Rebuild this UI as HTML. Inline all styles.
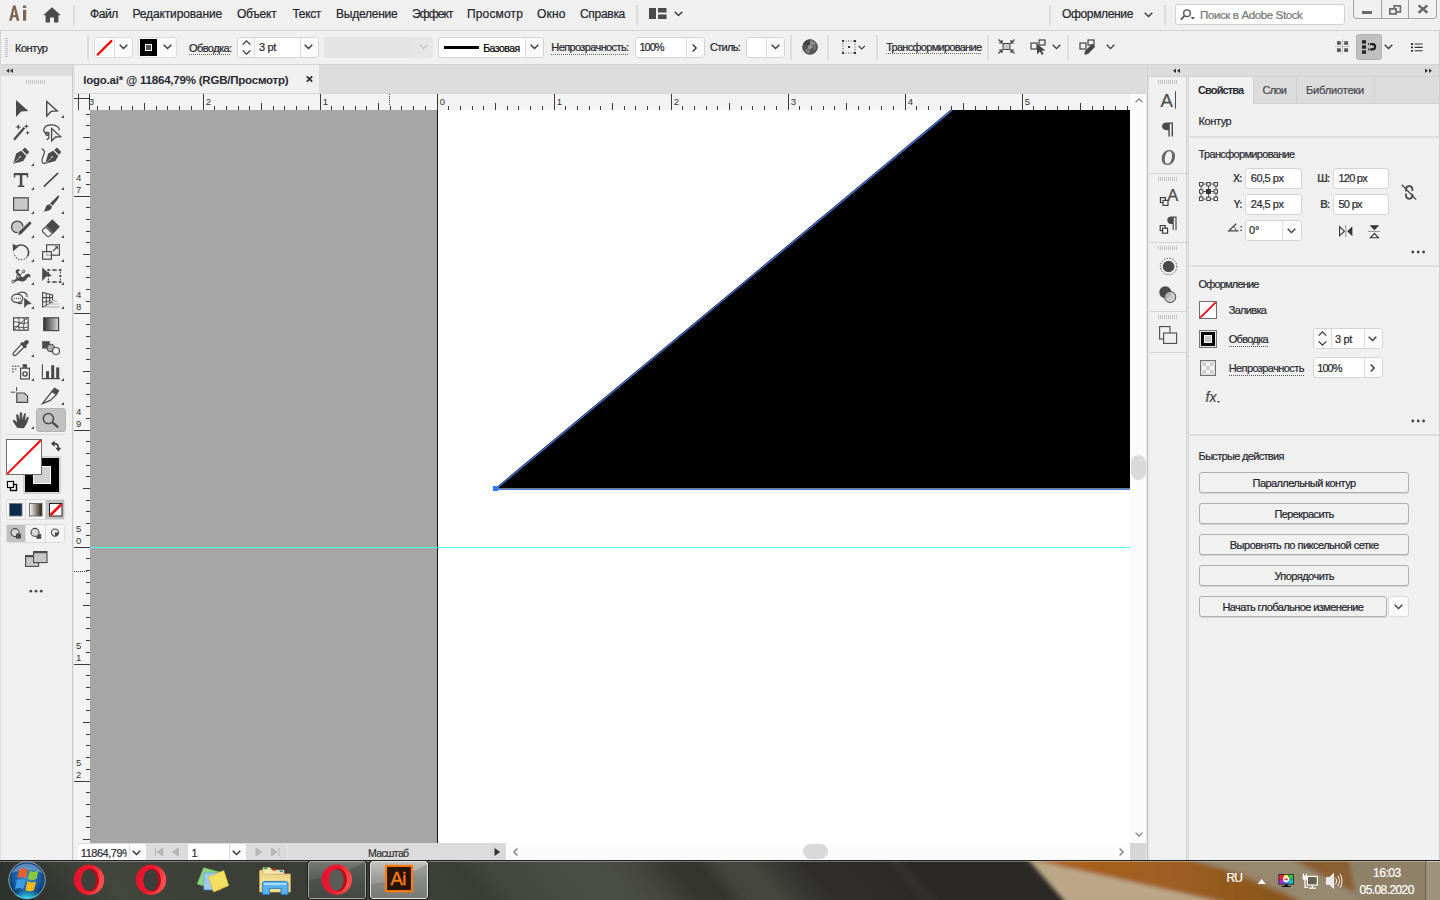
<!DOCTYPE html>
<html><head><meta charset="utf-8">
<style>
*{box-sizing:border-box;margin:0;padding:0}
html,body{width:1440px;height:900px;overflow:hidden;background:#f0f0f0;font-family:"Liberation Sans",sans-serif;font-size:11px;color:#333}
.a{position:absolute}
.t{position:absolute;white-space:nowrap;line-height:1;color:#26262e;-webkit-text-stroke:0.22px currentColor}
svg{position:absolute;overflow:visible}
.fld{position:absolute;background:#fff;border:1px solid #d4d4d4;border-radius:2px}
.lf{position:absolute;background:#fafafa;border:1px solid #dcdcdc;border-radius:2px}
.btn{position:absolute;border:1px solid #b0b0b0;border-radius:3px;background:#f1f1f1;box-shadow:0 1px 0 #d4d4d4}
.vs{position:absolute;width:1px;background:#d2d2d2}
.hs{position:absolute;height:1px;background:#d2d2d2}
.du{border-bottom:1px dotted #666;padding-bottom:1px}
</style></head><body>
<!-- menubar -->
<div class="a" id="menubar" style="left:0;top:0;width:1440px;height:31px;background:#f0f0f0;"></div>
<!-- Ai logo -->
<svg style="left:0;top:0" width="30" height="30" viewBox="0 0 30 30"><path fill-rule="evenodd" d="M9.1 20.8 L13 5.4 L15.6 5.4 L19.4 20.8 L16.7 20.8 L15.9 17.3 L12.6 17.3 L11.8 20.8 Z M13.1 15.1 L15.4 15.1 L14.25 9.2 Z M23 9.7 H26.2 V20.8 H23 Z M23 5.4 H26.2 V8.1 H23 Z" fill="#806453"/></svg>
<!-- home -->
<svg style="left:43px;top:7px" width="18" height="16" viewBox="0 0 18 16"><path d="M9 0.3 L0.2 8.2 L2.6 8.2 L2.6 15.6 L7 15.6 L7 10.6 L11 10.6 L11 15.6 L15.4 15.6 L15.4 8.2 L17.8 8.2 Z" fill="#4b4b4b"/></svg>
<div class="vs" style="left:73px;top:5px;height:20px;width:2px;background:#dcdcdc"></div>
<span class="t" style="left:90.00px;top:8.00px;font-size:12px;letter-spacing:-0.379px;">Файл</span>
<span class="t" style="left:132.50px;top:8.00px;font-size:12px;letter-spacing:-0.137px;">Редактирование</span>
<span class="t" style="left:237.00px;top:8.00px;font-size:12px;letter-spacing:-0.229px;">Объект</span>
<span class="t" style="left:292.50px;top:8.00px;font-size:12px;letter-spacing:-0.344px;">Текст</span>
<span class="t" style="left:336.00px;top:8.00px;font-size:12px;letter-spacing:-0.233px;">Выделение</span>
<span class="t" style="left:412.00px;top:8.00px;font-size:12px;letter-spacing:-0.906px;">Эффект</span>
<span class="t" style="left:467.00px;top:8.00px;font-size:12px;letter-spacing:0.148px;">Просмотр</span>
<span class="t" style="left:537.00px;top:8.00px;font-size:12px;letter-spacing:0.152px;">Окно</span>
<span class="t" style="left:580.00px;top:8.00px;font-size:12px;letter-spacing:-0.297px;">Справка</span>
<div class="vs" style="left:636px;top:5px;height:20px;width:2px;background:#dcdcdc"></div>
<!-- workspace switcher icon -->
<svg style="left:649px;top:8px" width="18" height="12" viewBox="0 0 18 12"><rect x="0" y="0" width="7" height="11" fill="#4b4b4b"/><rect x="9" y="0" width="8.5" height="4.5" fill="#4b4b4b"/><rect x="9" y="6.5" width="8.5" height="4.5" fill="#4b4b4b"/></svg>
<svg style="left:674px;top:11px" width="9" height="6" viewBox="0 0 9 6"><path d="M0.7 0.8 L4.5 4.6 L8.3 0.8" fill="none" stroke="#3a3a3a" stroke-width="1.4"/></svg>
<!-- right side -->
<div class="vs" style="left:1049px;top:5px;height:20px;width:2px;background:#dcdcdc"></div>
<span class="t" style="left:1062.00px;top:8.00px;font-size:12px;letter-spacing:-0.348px;">Оформление</span>
<svg style="left:1144px;top:12px" width="9" height="6" viewBox="0 0 9 6"><path d="M0.7 0.8 L4.5 4.6 L8.3 0.8" fill="none" stroke="#3a3a3a" stroke-width="1.4"/></svg>
<div class="vs" style="left:1164px;top:5px;height:20px;width:2px;background:#dcdcdc"></div>
<div class="fld" style="left:1175px;top:4px;width:170px;height:21px;border-color:#d0d0d0;border-radius:3px"></div>
<svg style="left:1180px;top:8px" width="16" height="13" viewBox="0 0 16 13"><circle cx="7" cy="5.2" r="3.3" fill="none" stroke="#555" stroke-width="1.4"/><path d="M4.7 7.6 L0.8 11.6" stroke="#555" stroke-width="1.7"/><path d="M10.6 9 L15 9 L12.8 11.5 Z" fill="#555"/></svg>
<span class="t" style="left:1200.00px;top:10.00px;font-size:11.5px;letter-spacing:-0.373px;color:#777">Поиск в Adobe Stock</span>
<!-- window buttons -->
<div class="a" style="left:1353px;top:-2px;width:84px;height:21px;border:1px solid #a2a2a2;border-radius:0 0 3px 3px;background:#f0f0f0"></div>
<div class="vs" style="left:1381px;top:0;height:18px;background:#a2a2a2"></div>
<div class="vs" style="left:1408px;top:0;height:18px;background:#a2a2a2"></div>
<div class="a" style="left:1362px;top:11px;width:10px;height:3px;background:#6a6a6a"></div>
<svg style="left:1389px;top:5px" width="13" height="10" viewBox="0 0 13 10"><rect x="5.2" y="0.9" width="6.2" height="6" fill="none" stroke="#6a6a6a" stroke-width="1.7"/><rect x="0.9" y="3.9" width="6.2" height="5" fill="#f0f0f0" stroke="#6a6a6a" stroke-width="1.7"/></svg>
<svg style="left:1417px;top:4px" width="12" height="10" viewBox="0 0 12 10"><path d="M1.6 1.4 L10.4 8.8 M10.4 1.4 L1.6 8.8" stroke="#6a6a6a" stroke-width="2.5"/></svg>

<!-- ctrlbar -->
<div class="a" id="ctrlbar" style="left:0;top:30px;width:1440px;height:35px;background:#f0f0f0;border:1px solid #d4d4d4"></div>
<!-- gripper -->
<div class="a" style="left:5px;top:38px;width:3px;height:19px;background:repeating-linear-gradient(#c4c4c4 0 1px,transparent 1px 2px)"></div>
<span class="t" style="left:15.00px;top:43.00px;font-size:11px;letter-spacing:-0.461px;">Контур</span>
<div class="vs" style="left:87px;top:35px;height:25px;width:2px;background:#dedede"></div>
<!-- fill widget -->
<div class="lf" style="left:94px;top:37px;width:39px;height:21px;border-radius:3px"></div>
<div class="a" style="left:95px;top:38px;width:20px;height:19px;background:#fff;border-right:1px solid #dcdcdc;border-radius:2px 0 0 2px"></div>
<svg style="left:95px;top:38px" width="20" height="19"><path d="M2 17.2 L17 2.4" stroke="#f40000" stroke-width="2.2"/></svg>
<svg style="left:119px;top:44px" width="9" height="6" viewBox="0 0 9 6"><path d="M0.7 0.8 L4.5 4.6 L8.3 0.8" fill="none" stroke="#3a3a3a" stroke-width="1.4"/></svg>
<!-- stroke widget -->
<div class="lf" style="left:138px;top:37px;width:39px;height:21px;border-radius:3px"></div>
<div class="a" style="left:140px;top:39px;width:17px;height:17px;background:#000"></div>
<div class="a" style="left:145px;top:44px;width:7px;height:7px;background:#555;border:1px solid #fff"></div>
<svg style="left:163px;top:44px" width="9" height="6" viewBox="0 0 9 6"><path d="M0.7 0.8 L4.5 4.6 L8.3 0.8" fill="none" stroke="#3a3a3a" stroke-width="1.4"/></svg>
<span class="t" style="left:189.00px;top:43.00px;font-size:11px;letter-spacing:-0.576px;">Обводка:</span>
<div class="a" style="left:189px;top:54px;width:42px;height:1px;background:repeating-linear-gradient(90deg,#666 0 1px,transparent 1px 2px)"></div>
<!-- stroke weight field -->
<div class="fld" style="left:237px;top:37px;width:82px;height:21px;border-radius:3px"></div>
<div class="a" style="left:238px;top:38px;width:17px;height:19px;background:#fafafa;border-right:1px solid #dcdcdc;border-radius:2px 0 0 2px"></div>
<div class="a" style="left:300px;top:38px;width:18px;height:19px;background:#fafafa;border-left:1px solid #dcdcdc;border-radius:0 2px 2px 0"></div>
<svg style="left:242px;top:40px" width="9" height="15" viewBox="0 0 9 15"><path d="M0.7 4.6 L4.5 0.8 L8.3 4.6 M0.7 10.4 L4.5 14.2 L8.3 10.4" fill="none" stroke="#3a3a3a" stroke-width="1.3"/></svg>
<span class="t" style="left:259.00px;top:42.00px;font-size:11px;letter-spacing:-0.340px;">3 pt</span>
<svg style="left:304px;top:44px" width="9" height="6" viewBox="0 0 9 6"><path d="M0.7 0.8 L4.5 4.6 L8.3 0.8" fill="none" stroke="#3a3a3a" stroke-width="1.4"/></svg>
<!-- disabled dropdown -->
<div class="a" style="left:324px;top:37px;width:109px;height:21px;background:#e4e4e4;border-radius:2px"></div>
<div class="a" style="left:413px;top:37px;width:20px;height:21px;background:#e6e6e6;border-radius:2px"></div>
<svg style="left:419px;top:44px" width="9" height="6" viewBox="0 0 9 6"><path d="M0.7 0.8 L4.5 4.6 L8.3 0.8" fill="none" stroke="#c6c6c6" stroke-width="1.4"/></svg>
<!-- brush definition -->
<div class="fld" style="left:438px;top:37px;width:106px;height:21px;border-radius:3px"></div>
<div class="a" style="left:525px;top:38px;width:18px;height:19px;background:#fafafa;border-left:1px solid #dcdcdc;border-radius:0 2px 2px 0"></div>
<div class="a" style="left:444px;top:46px;width:35px;height:3px;background:#000"></div>
<span class="t" style="left:483.20px;top:43.00px;font-size:10.5px;letter-spacing:-0.520px;color:#000">Базовая</span>
<svg style="left:530px;top:44px" width="9" height="6" viewBox="0 0 9 6"><path d="M0.7 0.8 L4.5 4.6 L8.3 0.8" fill="none" stroke="#3a3a3a" stroke-width="1.4"/></svg>
<span class="t" style="left:551.30px;top:42.00px;font-size:11px;letter-spacing:-0.615px;">Непрозрачность:</span>
<div class="a" style="left:551px;top:54px;width:77px;height:1px;background:repeating-linear-gradient(90deg,#666 0 1px,transparent 1px 2px)"></div>
<!-- opacity field -->
<div class="fld" style="left:635px;top:37px;width:70px;height:21px;border-radius:3px"></div>
<div class="a" style="left:686px;top:38px;width:18px;height:19px;background:#fafafa;border-left:1px solid #dcdcdc;border-radius:0 2px 2px 0"></div>
<span class="t" style="left:639.50px;top:42.00px;font-size:11px;letter-spacing:-1.010px;">100%</span>
<svg style="left:692.2px;top:43.6px" width="6" height="8" viewBox="0 0 6 8"><path d="M0.7 0.6 L4.1 4 L0.7 7.4" fill="none" stroke="#3a3a3a" stroke-width="1.4"/></svg>
<span class="t" style="left:710.00px;top:42.00px;font-size:11px;letter-spacing:-0.724px;">Стиль:</span>
<div class="fld" style="left:746px;top:37px;width:39px;height:21px;border-radius:3px"></div>
<div class="a" style="left:766px;top:38px;width:18px;height:19px;background:#fafafa;border-left:1px solid #dcdcdc;border-radius:0 2px 2px 0"></div>
<svg style="left:771px;top:44px" width="9" height="6" viewBox="0 0 9 6"><path d="M0.7 0.8 L4.5 4.6 L8.3 0.8" fill="none" stroke="#3a3a3a" stroke-width="1.4"/></svg>
<div class="vs" style="left:790px;top:35px;height:25px;width:2px;background:#dedede"></div>
<!-- globe (recolor) -->
<svg style="left:802px;top:39px" width="16" height="16" viewBox="0 0 16 16"><circle cx="8" cy="8" r="7.6" fill="#555"/><path d="M8 8 L8 0.4 A7.6 7.6 0 0 1 14.6 4.2 Z" fill="#8a8a8a"/><path d="M8 8 L14.6 4.2 A7.6 7.6 0 0 1 14.6 11.8 Z" fill="#6e6e6e"/><path d="M8 8 L8 15.6 A7.6 7.6 0 0 1 1.4 11.8 Z" fill="#777"/><path d="M8 8 L1.4 4.2 A7.6 7.6 0 0 1 8 0.4 Z" fill="#444"/><circle cx="8" cy="8" r="2" fill="#999"/><circle cx="8" cy="8" r="7.2" fill="none" stroke="#444" stroke-width="0.8"/></svg>
<div class="vs" style="left:827px;top:35px;height:25px;width:2px;background:#dedede"></div>
<!-- align icon -->
<svg style="left:842px;top:40px" width="24" height="14" viewBox="0 0 24 14"><rect x="1" y="1" width="12" height="12" fill="none" stroke="#444" stroke-width="1" stroke-dasharray="1 1.5"/><rect x="0" y="0" width="2" height="2" fill="#333"/><rect x="12" y="0" width="2" height="2" fill="#333"/><rect x="0" y="12" width="2" height="2" fill="#333"/><rect x="12" y="12" width="2" height="2" fill="#333"/><rect x="6" y="6" width="2" height="2" fill="#333"/><path d="M16.5 5.8 L19.7 9 L22.9 5.8" fill="none" stroke="#3a3a3a" stroke-width="1.2"/></svg>
<div class="vs" style="left:876px;top:35px;height:25px;width:2px;background:#dedede"></div>
<span class="t" style="left:886.20px;top:42.00px;font-size:11px;letter-spacing:-0.719px;">Трансформирование</span>
<div class="a" style="left:886px;top:53px;width:95px;height:1px;background:repeating-linear-gradient(90deg,#666 0 1px,transparent 1px 2px)"></div>
<div class="vs" style="left:987px;top:35px;height:25px;width:2px;background:#dedede"></div>
<!-- isolate icon -->
<svg style="left:998px;top:39px" width="17" height="15" viewBox="0 0 17 15"><rect x="5" y="4.5" width="7" height="6" fill="#c8c8c8" stroke="#444" stroke-width="1"/><path d="M0.5 0.5 L4 4 M1 4 L4 4 L4 1 M16.5 0.5 L13 4 M16 4 L13 4 L13 1 M0.5 14.5 L4 11 M1 11 L4 11 L4 14 M16.5 14.5 L13 11 M16 11 L13 11 L13 14" fill="none" stroke="#444" stroke-width="1.2"/></svg>
<!-- select similar icon -->
<svg style="left:1030px;top:39px" width="17" height="16" viewBox="0 0 17 16"><rect x="1" y="4" width="6" height="6" fill="none" stroke="#444" stroke-width="1.2"/><rect x="9" y="1" width="6" height="5" fill="none" stroke="#444" stroke-width="1.2"/><path d="M7 5 L7 15.5 L9.8 12.6 L12 16 L13.6 15 L11.6 11.8 L15.5 11.4 Z" fill="#444"/></svg>
<svg style="left:1052px;top:44px" width="9" height="6" viewBox="0 0 9 6"><path d="M0.7 0.8 L4.5 4.6 L8.3 0.8" fill="none" stroke="#3a3a3a" stroke-width="1.3"/></svg>
<div class="vs" style="left:1067px;top:35px;height:25px;width:2px;background:#dedede"></div>
<!-- edit similar icon -->
<svg style="left:1079px;top:39px" width="17" height="16" viewBox="0 0 17 16"><rect x="1" y="4" width="6" height="6" fill="none" stroke="#444" stroke-width="1.2"/><rect x="9" y="1" width="6" height="5" fill="none" stroke="#444" stroke-width="1.2"/><path d="M5.2 15.8 L6 12 L13.2 4.8 L16.2 7.8 L9 15 Z" fill="#444"/></svg>
<svg style="left:1106px;top:44px" width="9" height="6" viewBox="0 0 9 6"><path d="M0.7 0.8 L4.5 4.6 L8.3 0.8" fill="none" stroke="#3a3a3a" stroke-width="1.3"/></svg>
<!-- right icons -->
<svg style="left:1335px;top:39px" width="15" height="15" viewBox="0 0 15 15"><path d="M7.4 0 L7.4 15 M0 7.4 L15 7.4" stroke="#b4b4b4" stroke-width="0.8"/><rect x="2" y="2.2" width="3.8" height="3.6" fill="#555"/><rect x="9.2" y="2.2" width="3.8" height="3.6" fill="#555"/><rect x="2" y="9.3" width="3.8" height="3.6" fill="#555"/><rect x="9.2" y="9.3" width="3.8" height="3.6" fill="#555"/></svg>
<div class="a" style="left:1356px;top:34px;width:26px;height:26px;background:#c0c0c0;border:1px solid #b2b2b2;border-radius:3px"></div>
<svg style="left:1362px;top:40px" width="15" height="14" viewBox="0 0 15 14"><rect x="0" y="0.2" width="4" height="3.4" fill="#222"/><rect x="0" y="5.3" width="4" height="3.4" fill="#222"/><rect x="0" y="10.4" width="4" height="3.4" fill="#222"/><path d="M6.2 4.2 L10.5 4.2 A2.6 2.6 0 0 1 10.5 9.4 L6.2 9.4" fill="none" stroke="#222" stroke-width="2.2"/><path d="M7.6 3 L7.6 10.6" stroke="#c0c0c0" stroke-width="0.9"/></svg>
<svg style="left:1383.5px;top:44px" width="9" height="6" viewBox="0 0 9 6"><path d="M0.7 0.8 L4.5 4.6 L8.3 0.8" fill="none" stroke="#3a3a3a" stroke-width="1.4"/></svg>
<svg style="left:1410.5px;top:43px" width="12" height="9" viewBox="0 0 12 9"><path d="M0 1 L2 1 M0 4.4 L2 4.4 M0 7.8 L2 7.8" stroke="#333" stroke-width="1.8"/><path d="M3.6 1 L11.6 1 M3.6 4.4 L11.6 4.4 M3.6 7.8 L11.6 7.8" stroke="#333" stroke-width="1.1"/></svg>

<!-- tools -->
<div class="a" id="tools" style="left:0;top:65px;width:72px;height:795px;background:#f0f0f0;border-left:1px solid #e0e0e0"></div>
<div class="a" style="left:1px;top:65px;width:71px;height:11px;background:#dcdcdc"></div>
<div class="a" style="left:72px;top:65px;width:2px;height:795px;background:#e6e6e6;border-left:1px solid #c9c9c9"></div>
<div class="a" style="left:26px;top:80px;width:20px;height:4px;background:repeating-linear-gradient(90deg,#c6c6c6 0 1px,transparent 1px 2px)"></div>
<div class="a" style="left:36px;top:408px;width:30px;height:24px;background:#c1c1c1;border:1px solid #b3b3b3;border-radius:3px"></div>
<div class="hs" style="left:6px;top:434px;width:60px;background:#dcdcdc"></div>
<svg style="left:0;top:65px" width="74" height="795" viewBox="0 65 74 795">
<g fill="#4a4a4a" stroke="none">
<!-- collapse arrows -->
<path d="M9.2 68.6 L6.2 70.8 L9.2 73 Z M13 68.6 L10 70.8 L13 73 Z" fill="#333"/>
<!-- corner triangles -->
<g id="tri"><path d="M64 115 L64 118 L61 118 Z"/></g>
<path d="M34 163 L34 166 L31 166 Z"/>
<path d="M34 187 L34 190 L31 190 Z M64 187 L64 190 L61 190 Z"/>
<path d="M34 211 L34 214 L31 214 Z M64 211 L64 214 L61 214 Z"/>
<path d="M34 235 L34 238 L31 238 Z M64 235 L64 238 L61 238 Z"/>
<path d="M34 259 L34 262 L31 262 Z M64 259 L64 262 L61 262 Z"/>
<path d="M34 282 L34 285 L31 285 Z M64 282 L64 285 L61 285 Z"/>
<path d="M34 306 L34 309 L31 309 Z M64 306 L64 309 L61 309 Z"/>
<path d="M34 354 L34 357 L31 357 Z"/>
<path d="M34 378 L34 381 L31 381 Z M64 378 L64 381 L61 381 Z"/>
<path d="M64 402 L64 405 L61 405 Z"/>
<path d="M34 426 L34 429 L31 429 Z"/>
<!-- 1 selection -->
<path d="M16 100 L28.3 111 L21.2 111.6 L16 117 Z"/>
<!-- 2 direct selection -->
<path d="M46.7 101.6 L57.2 110.9 L51.2 111.4 L46.7 116 Z" fill="none" stroke="#4a4a4a" stroke-width="1.4"/>
<!-- 3 magic wand -->
<path d="M14 139.8 L24.3 127.8" stroke="#4a4a4a" stroke-width="2.3" fill="none"/>
<path d="M18.3 124 L19.1 126.3 L21.4 127 L19.1 127.8 L18.3 130 L17.5 127.8 L15.2 127 L17.5 126.3 Z"/>
<path d="M26.3 123.6 L27 125.7 L29.1 126.3 L27 127 L26.3 129 L25.6 127 L23.5 126.3 L25.6 125.7 Z"/>
<path d="M27.6 130.6 L28.2 132.2 L29.8 132.8 L28.2 133.4 L27.6 135 L27 133.4 L25.4 132.8 L27 132.2 Z"/>
<!-- 4 lasso -->
<path d="M49 134.3 C45 133.8 43.3 131.5 43.8 129.3 C44.6 126 48.5 124.8 52 124.9 C56.5 125 59.6 127.3 59.2 130.3" fill="none" stroke="#4a4a4a" stroke-width="1.3"/>
<circle cx="47.3" cy="133.8" r="1.7" fill="none" stroke="#4a4a4a" stroke-width="1.2"/>
<path d="M48.5 135 C49.3 137 48.5 139 46.6 139.8" fill="none" stroke="#4a4a4a" stroke-width="1.2"/>
<path d="M51.6 128.6 L60.6 136.6 L55.6 137 L51.6 141 Z" fill="#f0f0f0" stroke="#4a4a4a" stroke-width="1.3"/>
<!-- 5 pen -->
<g id="pen"><path d="M13.2 163.8 L16.2 153.6 L21.3 150.8 L26.3 155.9 L23.4 161 Z M13.9 163.1 L19.4 157.6" />
<path d="M14 163 L19.4 157.6" stroke="#c8c8c8" stroke-width="0.8" fill="none"/><circle cx="20" cy="157" r="1" fill="#c8c8c8"/>
<path d="M22.2 150 L25 147.6 L29.2 151.9 L27 154.8 Z"/></g>
<!-- 6 curvature pen -->
<g transform="translate(32,0)"><path d="M13.2 163.8 L16.2 153.6 L21.3 150.8 L26.3 155.9 L23.4 161 Z"/><path d="M14 163 L19.4 157.6" stroke="#c8c8c8" stroke-width="0.8" fill="none"/><circle cx="20" cy="157" r="1" fill="#c8c8c8"/><path d="M22.2 150 L25 147.6 L29.2 151.9 L27 154.8 Z"/></g>
<path d="M41.6 148.8 C44.5 149.5 45 152 43.6 155 C42 158.5 41 161.5 43 163 C44 163.6 45.2 163.4 46 162.6" fill="none" stroke="#4a4a4a" stroke-width="1.2"/>
<!-- 7 type -->
<path d="M13.8 173 L28.2 173 L28.2 177.5 L26.8 177.5 L26.8 175.2 L22.3 175.2 L22.3 185.4 L24.3 185.4 L24.3 187 L17.8 187 L17.8 185.4 L19.8 185.4 L19.8 175.2 L15.2 175.2 L15.2 177.5 L13.8 177.5 Z"/>
<!-- 8 line -->
<path d="M43.8 186.6 L58.2 172.8" stroke="#4a4a4a" stroke-width="1.6" fill="none"/>
<!-- 9 rectangle -->
<rect x="13.6" y="197.8" width="14.6" height="12.5" fill="#c8c8c8" stroke="#4a4a4a" stroke-width="1.2"/>
<!-- 10 brush -->
<path d="M58.9 195.6 C59.6 196.3 58.6 198.4 57.4 199.8 L52.6 205.8 L50 203.4 L55.6 198 C57 196.6 58.2 195.2 58.9 195.6 Z"/>
<path d="M49.4 204.2 L51.8 206.6 C52 209.4 49.5 211.4 43 211.6 C45 210.4 45.2 208.8 45.8 207 C46.4 205.3 47.8 204.2 49.4 204.2 Z"/>
<!-- 11 shaper -->
<circle cx="17.3" cy="226.9" r="5.8" fill="#c8c8c8" stroke="#4a4a4a" stroke-width="1.3"/>
<path d="M17.6 236 L18.6 231.4 L28.8 221.8 C29.6 221.1 30.6 221.2 31.2 221.9 C31.9 222.6 31.9 223.6 31.2 224.3 L21.4 234.4 Z" stroke="#f0f0f0" stroke-width="1" />
<!-- 12 eraser -->
<path d="M52.3 219.2 L59.9 226.7 L53.4 233.4 L45.8 225.8 Z"/>
<path d="M45.6 226.8 L52.4 233.6 L49.6 236.2 C48.8 236.9 47.8 236.9 47.1 236.2 L42.9 232 C42.2 231.3 42.2 230.3 42.9 229.6 Z" fill="#f4f4f4" stroke="#4a4a4a" stroke-width="1.1"/>
<!-- 13 rotate -->
<path d="M15.2 247.6 C17.5 244.6 22.5 244 25.8 246.6 C28.8 249 29.4 253.2 27.4 256.4" fill="none" stroke="#4a4a4a" stroke-width="1.6"/>
<path d="M12.6 243.8 L18.6 246.4 L13 251.6 Z"/>
<path d="M27 257 C24.6 260 20 260.6 17 258.4 C15.2 257 14.2 255.2 14 253.2" fill="none" stroke="#4a4a4a" stroke-width="1.3" stroke-dasharray="1.2 1.6"/>
<!-- 14 scale -->
<rect x="46.6" y="244.8" width="12.8" height="10.4" fill="none" stroke="#4a4a4a" stroke-width="1.2"/>
<rect x="42.6" y="251.6" width="8.8" height="7.6" fill="#f0f0f0" fill-opacity="0.6" stroke="#4a4a4a" stroke-width="1.2"/>
<path d="M53 251 L57.2 246.8" stroke="#4a4a4a" stroke-width="1.2" fill="none"/><path d="M54.6 246.2 L58 246.2 L58 249.6 Z"/>
<!-- 15 width tool -->
<path d="M12.6 281.2 C15 280.6 16.6 279.4 17.4 277.6 C18.2 275.8 17.4 274.4 16.4 273.4 C15.2 272.2 15.4 270.2 17 269.4 C18.4 268.7 20 269.4 20.4 270.8 C19.4 270.4 18.4 270.8 18.2 271.6 C18 272.6 19.2 273.2 20 274.2 C21 275.4 21.4 277.2 22.6 277.2 C24.4 277.2 25.6 273.8 28 273.8 C30 273.8 30.8 275.6 30.6 277.8 C29.6 276.6 28.4 276.6 27.6 277.6 C26.4 279.2 25.2 281.8 22.2 281.6 C19.8 281.4 18.8 280.2 17.8 280.6 C16.4 281.2 15 282.4 12.6 282.4 Z"/>
<circle cx="13.2" cy="281.6" r="1.4" fill="#f0f0f0" stroke="#4a4a4a" stroke-width="0.9"/><circle cx="18.2" cy="276.6" r="1.7" fill="#f0f0f0" stroke="#4a4a4a" stroke-width="0.9"/><circle cx="23.6" cy="271.4" r="1.3" fill="#f0f0f0" stroke="#4a4a4a" stroke-width="0.9"/>
<path d="M13.6 281.2 L23.4 271.6" stroke="#4a4a4a" stroke-width="0.8"/>
<!-- 16 free transform -->
<path d="M42.2 267.4 L52 276 L46.4 276.4 L42.2 281 Z"/>
<rect x="48.4" y="270" width="12" height="12" fill="none" stroke="#4a4a4a" stroke-width="1.1" stroke-dasharray="2 1.4"/>
<path d="M47.4 269 h2 v2 h-2z M53.4 269 h2 v2 h-2z M59.4 269 h2 v2 h-2z M59.4 275 h2 v2 h-2z M59.4 281 h2 v2 h-2z M53.4 281 h2 v2 h-2z M47.4 281 h2 v2 h-2z"/>
<!-- 17 shape builder -->
<ellipse cx="17.2" cy="298.4" rx="5.6" ry="4.3" fill="none" stroke="#4a4a4a" stroke-width="1.2"/>
<path d="M17.6 294.4 C18.6 292.6 20.6 292 22.6 292.2 C25.4 292.6 27.2 294.6 27 297" fill="none" stroke="#4a4a4a" stroke-width="1.2"/>
<path d="M22.4 302.6 C21 303.8 19.4 304 18 303" fill="none" stroke="#4a4a4a" stroke-width="1.2"/>
<path d="M14 298.4 L22 298.4" stroke="#4a4a4a" stroke-width="1" stroke-dasharray="1 1" fill="none"/>
<path d="M24.2 297.4 L31.8 304 L27.4 304.4 L24.2 308 Z"/>
<!-- 18 perspective grid -->
<path d="M42.6 292.4 L42.6 307.2 L52.6 302 L52.6 295 Z M46.2 293.4 L46.2 305.4 M49.6 294.2 L49.6 303.6 M42.6 297.4 L52.6 297.6 M42.6 302.2 L52.6 300.2" fill="none" stroke="#4a4a4a" stroke-width="1.1"/>
<path d="M51 300 L56.4 300 L58 302 L50 302 Z" fill="#c8c8c8"/><path d="M48 303.4 L58.8 303.4 L59.4 304.6 L46 304.6 Z" fill="#b8b8b8"/><path d="M43.6 307 L60 307" stroke="#a8a8a8" stroke-width="1"/>
<!-- 19 mesh -->
<rect x="13.6" y="317.8" width="14.6" height="12.4" fill="#f4f4f4" stroke="#4a4a4a" stroke-width="1.2"/>
<path d="M13.6 322 C18 321 20 325 28.2 322.6 M13.6 327 C18 325 22 330 28.2 326.6 M18 317.8 C21 321 17 326 19.6 330.2 M23.6 317.8 C26 322 22 326 24.4 330.2 M14 330 C17 326 22 321 27.8 318" fill="none" stroke="#4a4a4a" stroke-width="1"/>
<!-- 20 gradient -->
<defs><linearGradient id="gr1" x1="0" x2="1" y1="0" y2="0"><stop offset="0" stop-color="#2e2e2e"/><stop offset="1" stop-color="#dcdcdc"/></linearGradient>
<linearGradient id="gr2" x1="0" x2="1" y1="0" y2="0"><stop offset="0" stop-color="#ffffff"/><stop offset="1" stop-color="#2a1c0c"/></linearGradient></defs>
<rect x="43.6" y="317.8" width="15" height="12.8" fill="url(#gr1)" stroke="#4a4a4a" stroke-width="1.2"/>
<!-- 21 eyedropper -->
<path d="M13.4 355 C12.8 354.4 13 353.4 13.6 352.6 L21.6 344.2 L24.4 347 L16 355 C15.2 355.6 14.2 355.8 13.4 355 Z" fill="#f0f0f0" stroke="#4a4a4a" stroke-width="1.2"/>
<path d="M20.2 343.6 L22 341.8 L23 342.8 L25.2 340.6 C26 339.8 27.4 339.8 28.2 340.6 C29 341.4 29 342.8 28.2 343.6 L26 345.8 L27 346.8 L25.2 348.6 Z"/>
<!-- 22 blend -->
<rect x="42.2" y="341.2" width="7.6" height="7.4"/>
<circle cx="50.8" cy="348" r="3.8" fill="#a8a8a8" stroke="#4a4a4a" stroke-width="1.1"/>
<circle cx="56" cy="351" r="3.5" fill="#f8f8f8" stroke="#4a4a4a" stroke-width="1.2"/>
<!-- 23 symbol sprayer -->
<rect x="20.6" y="368.2" width="8.8" height="10.8" fill="#f0f0f0" stroke="#4a4a4a" stroke-width="1.2"/>
<rect x="22.6" y="364.2" width="4.4" height="3.6"/>
<circle cx="25" cy="374" r="2.1" fill="none" stroke="#4a4a4a" stroke-width="1.4"/>
<path d="M12 365.4 h1.6 v1.6 h-1.6z M14.8 365.4 h1.6 v1.6 h-1.6z M17.6 365.4 h1.6 v1.6 h-1.6z M12 368.2 h1.6 v1.6 h-1.6z M14.8 368.2 h1.6 v1.6 h-1.6z M12 371 h1.6 v1.6 h-1.6z" fill="#6a6a6a"/>
<!-- 24 graph -->
<path d="M42.4 364.2 L42.4 378.6 L59.8 378.6" fill="none" stroke="#4a4a4a" stroke-width="1.1"/>
<rect x="46" y="371.2" width="3" height="7.4"/><rect x="51.2" y="365.2" width="3" height="13.4"/><rect x="56.2" y="367.4" width="3" height="11.2"/>
<!-- 25 artboard -->
<path d="M10.8 392.2 L15.2 392.2 M16.6 387 L16.6 391.2" stroke="#4a4a4a" stroke-width="1" fill="none"/>
<path d="M16.8 393 L24.4 393 L27.6 396.2 L27.6 402.4 L16.8 402.4 Z" fill="#c8c8c8" stroke="#4a4a4a" stroke-width="1.2"/>
<!-- 26 slice -->
<path d="M42.4 403.6 L51.8 391.6 L56.4 394.4 L50.4 400.4 Z" fill="#f0f0f0" stroke="#4a4a4a" stroke-width="1.2"/>
<path d="M51.4 391 L54.4 387.4 L59.4 390.4 L57 394.6 Z"/>
<!-- 27 hand -->
<path d="M17.2 427.8 C15.8 426 14.4 423.6 13 421.4 C12.4 420.2 13.6 419.2 14.6 420 L17 422.4 L16.2 415.4 C16 414 18 413.6 18.4 415 L19.6 420 L19.8 413.2 C19.8 411.8 21.8 411.8 22 413.2 L22.4 420 L23.8 414 C24.2 412.6 26 413 25.8 414.4 L25 421 L26.8 417.4 C27.4 416.2 29 417 28.6 418.2 C27.8 420.8 27 423.4 25.6 425.8 C25 426.8 24.4 427.6 23.6 428.2 Z"/>
<!-- 28 zoom -->
<circle cx="48.4" cy="418.6" r="5.1" fill="none" stroke="#4a4a4a" stroke-width="1.5"/>
<path d="M52.4 422.4 L58.2 427.4" stroke="#4a4a4a" stroke-width="2.2" fill="none"/>
</g>
<!-- fill / stroke swatches -->
<rect x="24.5" y="457.5" width="35" height="35" fill="#000" stroke="#f8f8f8" stroke-width="1"/>
<rect x="24" y="457" width="36" height="36" fill="none" stroke="#8a8a8a" stroke-width="0.6"/>
<rect x="33.5" y="466.5" width="17" height="17" fill="#d2d2d2" stroke="#fff" stroke-width="1"/>
<rect x="6.5" y="439.5" width="35" height="35" fill="#fff" stroke="#6e6e6e" stroke-width="1"/>
<path d="M7.4 473.6 L40.8 440.2" stroke="#f00" stroke-width="2" fill="none"/>
<!-- swap -->
<path d="M53.6 443.6 C57 443.4 58.6 445 58.4 448.4" fill="none" stroke="#3c3c3c" stroke-width="1.6"/>
<path d="M51 443.8 L54.6 440.6 L54.6 447 Z M55.4 447.8 L61.4 447.8 L58.4 451.6 Z" fill="#3c3c3c"/>
<!-- default -->
<rect x="10.5" y="484.5" width="6" height="6" fill="#fff" stroke="#000" stroke-width="1.4"/>
<rect x="7.5" y="481.5" width="6" height="6" fill="#fff" stroke="#000" stroke-width="1.2"/>
<!-- color mode row -->
<rect x="6.5" y="499.5" width="58" height="20" rx="2" fill="#f4f4f4" stroke="#dcdcdc"/>
<rect x="46" y="500" width="18" height="19" fill="#c1c1c1"/>
<path d="M25.5 500 L25.5 519 M45.5 500 L45.5 519" stroke="#dcdcdc"/>
<rect x="9.5" y="503.5" width="12.5" height="12.5" fill="#0c2d4e" stroke="#777" stroke-width="0.8"/>
<rect x="29.5" y="503.5" width="12.5" height="12.5" fill="url(#gr2)" stroke="#555" stroke-width="0.8"/>
<rect x="49.5" y="503.5" width="12.5" height="12.5" fill="#fff" stroke="#222" stroke-width="1"/>
<path d="M50.4 515.2 L61.2 504.4" stroke="#f00" stroke-width="2.6"/>
<!-- draw mode row -->
<rect x="6.5" y="524.5" width="58" height="18" rx="2" fill="#f4f4f4" stroke="#dcdcdc"/>
<rect x="7" y="525" width="18" height="17" fill="#c1c1c1"/>
<path d="M25.5 525 L25.5 542 M45.5 525 L45.5 542" stroke="#dcdcdc"/>
<circle cx="15" cy="532.6" r="4" fill="#d8d8d8" stroke="#4a4a4a" stroke-width="1.1"/><rect x="16" y="533.6" width="5" height="5" fill="#4a4a4a"/>
<rect x="36.4" y="534" width="4.8" height="4.8" fill="#4a4a4a"/><circle cx="35" cy="532.4" r="4" fill="#d8d8d8" stroke="#4a4a4a" stroke-width="1.1"/>
<circle cx="55" cy="532.6" r="3.6" fill="#e8e8e8" stroke="#4a4a4a" stroke-width="1.1"/><path d="M55 532.6 L58.6 532.6 A3.6 3.6 0 0 1 55 536.2 Z" fill="#4a4a4a"/>
<!-- screen mode -->
<rect x="25.6" y="555.6" width="13" height="10.8" fill="#c8c8c8" stroke="#4a4a4a" stroke-width="1.1"/><rect x="25.6" y="555.6" width="13" height="1.6" fill="#4a4a4a"/>
<rect x="33.6" y="551.6" width="13.4" height="11" fill="#c8c8c8" stroke="#4a4a4a" stroke-width="1.1"/><rect x="33.6" y="551.2" width="13.4" height="2" fill="#4a4a4a"/>
<!-- more -->
<circle cx="30.8" cy="591.2" r="1.4" fill="#4a4a4a"/><circle cx="36" cy="591.2" r="1.4" fill="#4a4a4a"/><circle cx="41.2" cy="591.2" r="1.4" fill="#4a4a4a"/>
</svg>

<!-- doc -->
<div class="a" id="doc" style="left:74px;top:65px;width:1073px;height:795px;background:#f0f0f0"></div>
<div class="a" style="left:74px;top:65px;width:1073px;height:29px;background:#dcdcdc;border-bottom:1px solid #d2d2d2"></div>
<div class="a" style="left:74px;top:65px;width:245px;height:28px;background:#f0f0f0;border-left:1px solid #e4e4e4"></div>
<span class="t" style="left:83.20px;top:75.00px;font-size:11.5px;letter-spacing:-0.209px;font-weight:bold;color:#2a2a32;-webkit-text-stroke:0">logo.ai* @ 11864,79% (RGB/Просмотр)</span>
<div class="a" style="left:74px;top:93px;width:1073px;height:1px;background:#d6d6d6"></div>
<svg style="left:305.5px;top:76px" width="7" height="6" viewBox="0 0 7 6"><path d="M0.8 0.4 L6.2 5.6 M6.2 0.4 L0.8 5.6" stroke="#333" stroke-width="1.9"/></svg>
<div class="a" style="left:74px;top:94px;width:1073px;height:16px;background:#f3f3f3"></div>
<div class="a" style="left:74px;top:94px;width:16px;height:749px;background:#f3f3f3"></div>
<div class="a" style="left:90px;top:110px;width:1040px;height:733px;background:#a6a6a6"></div>
<div class="a" style="left:438px;top:110px;width:692px;height:733px;background:#fff"></div>
<div class="a" style="left:437px;top:110px;width:1px;height:733px;background:#111"></div>
<svg style="left:0;top:0" width="1440" height="900" viewBox="0 0 1440 900">
<path d="M950.4 110 L1130 110 L1130 488 L495.5 488 Z" fill="#000"/>
<path d="M952.2 110 L497.2 488" fill="none" stroke="#4682ff" stroke-width="1.1"/>
<path d="M497 488.5 H1130" stroke="#7a7a7a" stroke-width="1"/>
<path d="M497 489.5 H1130" stroke="#4d88ff" stroke-width="1"/>
<rect x="493" y="486" width="5" height="5" fill="#2a7fff"/>
<path d="M90 547.5 L437 547.5" stroke="#4dffff" stroke-width="1"/>
<path d="M437 547.5 L1130 547.5" stroke="#4dffff" stroke-width="1"/>
<path d="M97.5 106 V110 M109.5 106 V110 M121.5 106 V110 M132.5 106 V110 M144.5 103 V110 M156.5 106 V110 M167.5 106 V110 M179.5 106 V110 M191.5 106 V110 M203.5 94 V110 M214.5 106 V110 M226.5 106 V110 M238.5 106 V110 M249.5 106 V110 M261.5 103 V110 M273.5 106 V110 M284.5 106 V110 M296.5 106 V110 M308.5 106 V110 M320.5 94 V110 M331.5 106 V110 M343.5 106 V110 M355.5 106 V110 M366.5 106 V110 M378.5 103 V110 M390.5 106 V110 M401.5 106 V110 M413.5 106 V110 M425.5 106 V110 M437.5 94 V110 M448.5 106 V110 M460.5 106 V110 M472.5 106 V110 M483.5 106 V110 M495.5 103 V110 M507.5 106 V110 M518.5 106 V110 M530.5 106 V110 M542.5 106 V110 M554.5 94 V110 M565.5 106 V110 M577.5 106 V110 M589.5 106 V110 M600.5 106 V110 M612.5 103 V110 M624.5 106 V110 M635.5 106 V110 M647.5 106 V110 M659.5 106 V110 M671.5 94 V110 M682.5 106 V110 M694.5 106 V110 M706.5 106 V110 M717.5 106 V110 M729.5 103 V110 M741.5 106 V110 M752.5 106 V110 M764.5 106 V110 M776.5 106 V110 M788.5 94 V110 M799.5 106 V110 M811.5 106 V110 M823.5 106 V110 M834.5 106 V110 M846.5 103 V110 M858.5 106 V110 M869.5 106 V110 M881.5 106 V110 M893.5 106 V110 M905.5 94 V110 M916.5 106 V110 M928.5 106 V110 M940.5 106 V110 M951.5 106 V110 M963.5 103 V110 M975.5 106 V110 M986.5 106 V110 M998.5 106 V110 M1010.5 106 V110 M1022.5 94 V110 M1033.5 106 V110 M1045.5 106 V110 M1057.5 106 V110 M1068.5 106 V110 M1080.5 103 V110 M1092.5 106 V110 M1103.5 106 V110 M1115.5 106 V110 M1127.5 106 V110" stroke="#3a3a3a" stroke-width="1" fill="none"/>
<path d="M86 114.5 H90 M86 125.5 H90 M83 137.5 H90 M86 149.5 H90 M86 160.5 H90 M86 172.5 H90 M86 184.5 H90 M74 196.5 H90 M86 207.5 H90 M86 219.5 H90 M86 231.5 H90 M86 242.5 H90 M83 254.5 H90 M86 266.5 H90 M86 277.5 H90 M86 289.5 H90 M86 301.5 H90 M74 313.5 H90 M86 324.5 H90 M86 336.5 H90 M86 348.5 H90 M86 359.5 H90 M83 371.5 H90 M86 383.5 H90 M86 394.5 H90 M86 406.5 H90 M86 418.5 H90 M74 430.5 H90 M86 441.5 H90 M86 453.5 H90 M86 465.5 H90 M86 476.5 H90 M83 488.5 H90 M86 500.5 H90 M86 511.5 H90 M86 523.5 H90 M86 535.5 H90 M74 547.5 H90 M86 558.5 H90 M86 570.5 H90 M86 582.5 H90 M86 593.5 H90 M83 605.5 H90 M86 617.5 H90 M86 628.5 H90 M86 640.5 H90 M86 652.5 H90 M74 664.5 H90 M86 675.5 H90 M86 687.5 H90 M86 699.5 H90 M86 710.5 H90 M83 722.5 H90 M86 734.5 H90 M86 745.5 H90 M86 757.5 H90 M86 769.5 H90 M74 781.5 H90 M86 792.5 H90 M86 804.5 H90 M86 816.5 H90 M86 827.5 H90 M83 839.5 H90" stroke="#3a3a3a" stroke-width="1" fill="none"/>
<path d="M78.5 94 V110 M74 98.5 H90 M89.5 94 V110" stroke="#3a3a3a" stroke-width="1" fill="none"/>
<path d="M389.5 94 V106" stroke="#3a3a3a" stroke-width="1" stroke-dasharray="1 1" fill="none"/>
<path d="M74 571.5 H87" stroke="#3a3a3a" stroke-width="1" stroke-dasharray="1 1" fill="none"/>
</svg>
<span class="t" style="left:88.80px;top:97.00px;font-size:9.5px;color:#333;-webkit-text-stroke:0">3</span>
<span class="t" style="left:205.80px;top:97.00px;font-size:9.5px;color:#333;-webkit-text-stroke:0">2</span>
<span class="t" style="left:322.80px;top:97.00px;font-size:9.5px;color:#333;-webkit-text-stroke:0">1</span>
<span class="t" style="left:439.80px;top:97.00px;font-size:9.5px;color:#333;-webkit-text-stroke:0">0</span>
<span class="t" style="left:556.80px;top:97.00px;font-size:9.5px;color:#333;-webkit-text-stroke:0">1</span>
<span class="t" style="left:673.80px;top:97.00px;font-size:9.5px;color:#333;-webkit-text-stroke:0">2</span>
<span class="t" style="left:790.80px;top:97.00px;font-size:9.5px;color:#333;-webkit-text-stroke:0">3</span>
<span class="t" style="left:907.80px;top:97.00px;font-size:9.5px;color:#333;-webkit-text-stroke:0">4</span>
<span class="t" style="left:1024.80px;top:97.00px;font-size:9.5px;color:#333;-webkit-text-stroke:0">5</span>
<span class="t" style="left:76.00px;top:173.00px;font-size:9.5px;color:#333;-webkit-text-stroke:0">4</span>
<span class="t" style="left:76.00px;top:185.00px;font-size:9.5px;color:#333;-webkit-text-stroke:0">7</span>
<span class="t" style="left:76.00px;top:290.00px;font-size:9.5px;color:#333;-webkit-text-stroke:0">4</span>
<span class="t" style="left:76.00px;top:302.00px;font-size:9.5px;color:#333;-webkit-text-stroke:0">8</span>
<span class="t" style="left:76.00px;top:407.00px;font-size:9.5px;color:#333;-webkit-text-stroke:0">4</span>
<span class="t" style="left:76.00px;top:419.00px;font-size:9.5px;color:#333;-webkit-text-stroke:0">9</span>
<span class="t" style="left:76.00px;top:524.00px;font-size:9.5px;color:#333;-webkit-text-stroke:0">5</span>
<span class="t" style="left:76.00px;top:536.00px;font-size:9.5px;color:#333;-webkit-text-stroke:0">0</span>
<span class="t" style="left:76.00px;top:641.00px;font-size:9.5px;color:#333;-webkit-text-stroke:0">5</span>
<span class="t" style="left:76.00px;top:653.00px;font-size:9.5px;color:#333;-webkit-text-stroke:0">1</span>
<span class="t" style="left:76.00px;top:758.00px;font-size:9.5px;color:#333;-webkit-text-stroke:0">5</span>
<span class="t" style="left:76.00px;top:770.00px;font-size:9.5px;color:#333;-webkit-text-stroke:0">2</span>
<div class="a" style="left:1130px;top:94px;width:16px;height:749px;background:#fbfbfb"></div>
<div class="a" style="left:1131px;top:455px;width:15px;height:25px;background:#d9d9d9;border-radius:7.5px"></div>
<svg style="left:1134.5px;top:98px" width="8" height="5" viewBox="0 0 8 5"><path d="M0.5 4.4 L4 0.9 L7.5 4.4" fill="none" stroke="#7c7c7c" stroke-width="1.3"/></svg>
<svg style="left:1134.5px;top:832px" width="8" height="5" viewBox="0 0 8 5"><path d="M0.5 0.6 L4 4.1 L7.5 0.6" fill="none" stroke="#7c7c7c" stroke-width="1.3"/></svg>
<div class="a" style="left:74px;top:843px;width:1073px;height:17px;background:#dcdcdc"></div>
<div class="a" style="left:74px;top:843px;width:4px;height:17px;background:#f0f0f0"></div>
<div class="a" style="left:78px;top:844px;width:51px;height:16px;background:#fff;border-radius:2px 0 0 0;overflow:hidden"></div>
<div class="a" style="left:78px;top:844px;width:48.5px;height:16px;overflow:hidden"><span class="t" style="left:2.80px;top:4.00px;font-size:11px;letter-spacing:-0.462px;color:#2d2d35">11864,79%</span></div>
<div class="a" style="left:129px;top:844px;width:17px;height:16px;background:#fafafa;border-left:1px solid #e0e0e0;border-radius:0 2px 0 0"></div>
<svg style="left:132px;top:850px" width="9" height="6" viewBox="0 0 9 6"><path d="M0.7 0.8 L4.5 4.6 L8.3 0.8" fill="none" stroke="#333" stroke-width="1.4"/></svg>
<svg style="left:155px;top:848px" width="25" height="8" viewBox="0 0 25 8"><path d="M0.5 0 V8 M7.8 0 L2.2 4 L7.8 8 Z M23.3 0 L17.7 4 L23.3 8 Z" fill="#b6b6b6" stroke="#b6b6b6" stroke-width="1"/></svg>
<div class="a" style="left:188px;top:844px;width:41px;height:16px;background:#fff;border-radius:2px 0 0 0"></div>
<span class="t" style="left:191.50px;top:848.00px;font-size:11px;color:#2d2d35">1</span>
<div class="a" style="left:229px;top:844px;width:17px;height:16px;background:#fafafa;border-left:1px solid #e0e0e0;border-radius:0 2px 0 0"></div>
<svg style="left:232px;top:850px" width="9" height="6" viewBox="0 0 9 6"><path d="M0.7 0.8 L4.5 4.6 L8.3 0.8" fill="none" stroke="#333" stroke-width="1.4"/></svg>
<svg style="left:255px;top:848px" width="25" height="8" viewBox="0 0 25 8"><path d="M1 0 L6.6 4 L1 8 Z M16.5 0 L22.1 4 L16.5 8 Z M24 0 V8" fill="#b6b6b6" stroke="#b6b6b6" stroke-width="1"/></svg>
<div class="a" style="left:287px;top:844px;width:1px;height:16px;background:#e6e6e6"></div>
<span class="t" style="left:368.00px;top:848.00px;font-size:10.5px;letter-spacing:-0.634px;color:#333">Масштаб</span>
<div class="a" style="left:489px;top:843px;width:17px;height:17px;background:#d9d9d9;border-left:1px solid #e2e2e2"></div>
<svg style="left:494px;top:848px" width="7" height="8" viewBox="0 0 7 8"><path d="M0.5 0 L6.2 4 L0.5 8 Z" fill="#333"/></svg>
<div class="a" style="left:506px;top:843px;width:624px;height:17px;background:#fbfbfb"></div>
<svg style="left:512.5px;top:848px" width="5" height="8" viewBox="0 0 5 8"><path d="M4.4 0.5 L0.9 4 L4.4 7.5" fill="none" stroke="#7c7c7c" stroke-width="1.3"/></svg>
<svg style="left:1119.2px;top:847.8px" width="5" height="8" viewBox="0 0 5 8"><path d="M0.6 0.5 L4.1 4 L0.6 7.5" fill="none" stroke="#7c7c7c" stroke-width="1.3"/></svg>
<div class="a" style="left:803px;top:844px;width:25px;height:15px;background:#d9d9d9;border-radius:7.5px"></div>
<div class="a" style="left:1130px;top:843px;width:16px;height:17px;background:#d6d6d6"></div>
<div class="a" style="left:1146px;top:65px;width:1px;height:795px;background:#e6e6e6"></div>
<div class="a" style="left:1147px;top:65px;width:1px;height:795px;background:#c8c8c8"></div>

<!-- dock -->
<div class="a" id="dock" style="left:1148px;top:65px;width:292px;height:795px;background:#f0f0f0"></div>
<div class="a" style="left:1148px;top:65px;width:292px;height:11px;background:#dcdcdc"></div>
<!-- icon column borders -->
<div class="vs" style="left:1148px;top:65px;height:795px;background:#e2e2e2"></div>
<div class="vs" style="left:1186px;top:76px;height:784px;background:#d0d0d0"></div>
<div class="vs" style="left:1187px;top:76px;height:784px;width:2px;background:#e6e6e6"></div>
<div class="vs" style="left:1188px;top:76px;height:784px;background:#d6d6d6"></div>
<div class="hs" style="left:1149px;top:173px;width:37px;background:#d6d6d6"></div>
<div class="hs" style="left:1149px;top:242px;width:37px;background:#d6d6d6"></div>
<div class="hs" style="left:1149px;top:311px;width:37px;background:#d6d6d6"></div>
<div class="hs" style="left:1149px;top:352px;width:37px;background:#d6d6d6"></div>
<!-- grippers -->
<div class="a" style="left:1158px;top:80px;width:19px;height:4px;background:repeating-linear-gradient(90deg,#c2c2c2 0 1px,transparent 1px 2px)"></div>
<div class="a" style="left:1158px;top:177px;width:19px;height:4px;background:repeating-linear-gradient(90deg,#c2c2c2 0 1px,transparent 1px 2px)"></div>
<div class="a" style="left:1158px;top:246px;width:19px;height:4px;background:repeating-linear-gradient(90deg,#c2c2c2 0 1px,transparent 1px 2px)"></div>
<div class="a" style="left:1158px;top:315px;width:19px;height:4px;background:repeating-linear-gradient(90deg,#c2c2c2 0 1px,transparent 1px 2px)"></div>
<svg style="left:0;top:0" width="1440" height="900" viewBox="0 0 1440 900">
<g fill="#4a4a4a">
<path d="M1176 68.5 L1173 70.7 L1176 72.9 Z M1180 68.5 L1177 70.7 L1180 72.9 Z" fill="#333"/>
<path d="M1429 68.5 L1432 70.7 L1429 72.9 Z M1425 68.5 L1428 70.7 L1425 72.9 Z" fill="#333"/>
<!-- A| -->
<path d="M1175.5 91.3 V108.7" stroke="#4a4a4a" stroke-width="1" fill="none"/>
<!-- pilcrow -->
<path d="M1173 122.4 L1173 136.4 L1171.6 136.4 L1171.6 123.8 L1169.8 123.8 L1169.8 136.4 L1168.4 136.4 L1168.4 130.2 L1166.6 130.2 C1163.8 130.2 1162 128.6 1162 126.3 C1162 124 1163.8 122.4 1166.6 122.4 Z"/>
<!-- char styles: squares + A -->
<rect x="1160.4" y="197.6" width="5" height="5" fill="#f0f0f0" stroke="#333" stroke-width="1.1"/><rect x="1163" y="200.4" width="5" height="5" fill="#f0f0f0" stroke="#333" stroke-width="1.1"/>
<rect x="1160.2" y="225.6" width="5" height="5" fill="#f0f0f0" stroke="#333" stroke-width="1.1"/><rect x="1162.6" y="228.2" width="5" height="5" fill="#f0f0f0" stroke="#333" stroke-width="1.1"/>
<path d="M1176.6 216.6 L1176.6 230 L1175.4 230 L1175.4 217.8 L1173.8 217.8 L1173.8 230 L1172.6 230 L1172.6 224 L1171.2 224 C1168.8 224 1167.2 222.4 1167.2 220.3 C1167.2 218.2 1168.8 216.6 1171.2 216.6 Z"/>
<!-- appearance circle -->
<circle cx="1168.6" cy="266.5" r="8.2" fill="none" stroke="#4a4a4a" stroke-width="1" stroke-dasharray="1.4 1.4"/>
<circle cx="1168.6" cy="266.5" r="5.8"/>
<!-- graphic styles -->
<circle cx="1165.3" cy="292.2" r="6"/>
<circle cx="1170.2" cy="297" r="5.6" fill="#c4c4c4" fill-opacity="0.85" stroke="#4a4a4a" stroke-width="1"/>
<!-- pathfinder-like -->
<rect x="1159.6" y="326.6" width="10.4" height="12.4" fill="#f0f0f0" stroke="#4a4a4a" stroke-width="1.1"/>
<rect x="1163.6" y="333" width="13" height="10.4" fill="#f0f0f0" stroke="#4a4a4a" stroke-width="1.1"/>
</g>
</svg>
<span class="t" style="left:1160.60px;top:92.00px;font-size:18.5px;color:#4a4a4a">A</span>
<span class="t" style="left:1167.20px;top:187.00px;font-size:16.5px;color:#4a4a4a">A</span>
<span class="t" style="left:1160.60px;top:146.00px;font-size:23.5px;color:#666;font-family:'Liberation Serif',serif;font-style:italic;font-weight:bold;-webkit-text-stroke:0;transform:scaleX(0.86);transform-origin:0 50%">O</span>
<!-- properties panel -->
<div class="a" style="left:1189px;top:76px;width:251px;height:27px;background:#dcdcdc"></div>
<div class="a" style="left:1189px;top:76px;width:65px;height:28px;background:#f0f0f0;border-right:1px solid #d0d0d0"></div>
<div class="vs" style="left:1296px;top:76px;height:27px;background:#cfcfcf"></div>
<div class="vs" style="left:1374px;top:76px;height:27px;background:#cfcfcf"></div>
<span class="t" style="left:1198.00px;top:85.00px;font-size:11px;letter-spacing:-0.875px;font-weight:bold;color:#2a2a32;-webkit-text-stroke:0">Свойства</span>
<span class="t" style="left:1262.50px;top:85.00px;font-size:11px;letter-spacing:-0.812px;color:#46464e">Слои</span>
<span class="t" style="left:1306.00px;top:85.00px;font-size:11px;letter-spacing:-0.161px;color:#46464e">Библиотеки</span>
<span class="t" style="left:1198.60px;top:116.00px;font-size:11px;letter-spacing:-0.428px;color:#2a2a32">Контур</span>
<div class="hs" style="left:1189px;top:136px;width:251px;height:2px;background:#dedede"></div>
<span class="t" style="left:1198.60px;top:149.00px;font-size:11px;letter-spacing:-0.672px;color:#2a2a32">Трансформирование</span>
<!-- ref point -->
<svg style="left:1199px;top:182px" width="19" height="19" viewBox="0 0 19 19"><path d="M2 2 H17 V17 H2 Z M2 9.5 H17 M9.5 2 V17" fill="none" stroke="#555" stroke-width="1"/><g fill="#f0f0f0" stroke="#444" stroke-width="1"><rect x="0.5" y="0.5" width="3.4" height="3.4"/><rect x="7.8" y="0.5" width="3.4" height="3.4"/><rect x="15.1" y="0.5" width="3.4" height="3.4"/><rect x="0.5" y="7.8" width="3.4" height="3.4"/><rect x="15.1" y="7.8" width="3.4" height="3.4"/><rect x="0.5" y="15.1" width="3.4" height="3.4"/><rect x="7.8" y="15.1" width="3.4" height="3.4"/><rect x="15.1" y="15.1" width="3.4" height="3.4"/></g><rect x="7" y="7" width="5" height="5" fill="#333"/></svg>
<span class="t" style="left:1233.00px;top:173.00px;font-size:10.5px;letter-spacing:-0.900px;font-weight:bold;color:#444;-webkit-text-stroke:0">X:</span>
<span class="t" style="left:1233.40px;top:199.00px;font-size:10.5px;letter-spacing:-0.717px;font-weight:bold;color:#444;-webkit-text-stroke:0">Y:</span>
<span class="t" style="left:1317.30px;top:173.00px;font-size:10.5px;letter-spacing:-0.981px;font-weight:bold;color:#444;-webkit-text-stroke:0">Ш:</span>
<span class="t" style="left:1320.20px;top:199.00px;font-size:10.5px;letter-spacing:-0.947px;font-weight:bold;color:#444;-webkit-text-stroke:0">В:</span>
<div class="fld" style="left:1245px;top:168px;width:57px;height:21px;border-radius:3px"></div>
<div class="fld" style="left:1245px;top:194px;width:57px;height:21px;border-radius:3px"></div>
<div class="fld" style="left:1333px;top:168px;width:56px;height:21px;border-radius:3px"></div>
<div class="fld" style="left:1333px;top:194px;width:56px;height:21px;border-radius:3px"></div>
<span class="t" style="left:1250.80px;top:173.00px;font-size:11px;letter-spacing:-0.499px;color:#2a2a32">60,5 px</span>
<span class="t" style="left:1250.80px;top:199.00px;font-size:11px;letter-spacing:-0.499px;color:#2a2a32">24,5 px</span>
<span class="t" style="left:1338.40px;top:173.00px;font-size:11px;letter-spacing:-0.739px;color:#2a2a32">120 px</span>
<span class="t" style="left:1338.40px;top:199.00px;font-size:11px;letter-spacing:-0.684px;color:#2a2a32">50 px</span>
<!-- angle -->
<svg style="left:1228px;top:223px" width="15" height="9" viewBox="0 0 15 9"><path d="M8.2 0.8 L0.9 7.8 L10.6 7.8" fill="none" stroke="#444" stroke-width="1.3"/><path d="M5.6 3.6 C7.2 4.6 7.8 6 7.8 7.6" fill="none" stroke="#444" stroke-width="1"/><rect x="12.4" y="3" width="1.4" height="1.4" fill="#444"/><rect x="12.4" y="6.6" width="1.4" height="1.4" fill="#444"/></svg>
<div class="fld" style="left:1245px;top:220px;width:57px;height:21px;border-radius:3px"></div>
<div class="a" style="left:1282px;top:221px;width:19px;height:19px;background:#fafafa;border-left:1px solid #dcdcdc;border-radius:0 2px 2px 0"></div>
<span class="t" style="left:1249.00px;top:225.00px;font-size:11px;letter-spacing:-0.066px;color:#2a2a32">0°</span>
<svg style="left:1286.5px;top:228px" width="9" height="6" viewBox="0 0 9 6"><path d="M0.7 0.8 L4.5 4.6 L8.3 0.8" fill="none" stroke="#3a3a3a" stroke-width="1.3"/></svg>
<!-- flips -->
<svg style="left:1339px;top:225px" width="42" height="14" viewBox="0 0 42 14"><path d="M0.6 1.6 L5.4 6.2 L0.6 10.8 Z" fill="none" stroke="#333" stroke-width="1.1"/><path d="M6.8 0.6 V12" stroke="#333" stroke-width="1" stroke-dasharray="1 1"/><path d="M13.4 1.2 L8.2 6.2 L13.4 11.2 Z" fill="#333"/>
<path d="M30.6 0.2 L40.2 0.2 L35.4 5.2 Z" fill="#333"/><path d="M29.6 6.4 H41.4" stroke="#333" stroke-width="1" stroke-dasharray="1 1"/><path d="M31.4 12.8 L39.4 12.8 L35.4 8.4 Z" fill="none" stroke="#333" stroke-width="1.1"/></svg>
<!-- link broken -->
<svg style="left:1401px;top:184px" width="16" height="17" viewBox="0 0 16 17"><path d="M5 7.4 V5.4 C5 3.4 6.4 2.2 8.2 2.2 C10 2.2 11.4 3.4 11.4 5.4 V7 M5 9.6 V11.6 C5 13.6 6.4 14.8 8.2 14.8 C10 14.8 11.4 13.6 11.4 11.6 V9.8" fill="none" stroke="#444" stroke-width="1.7"/><path d="M0.8 0.8 L15.2 15.6" stroke="#444" stroke-width="1.3"/></svg>
<svg style="left:1411px;top:250px" width="15" height="4" viewBox="0 0 15 4"><circle cx="1.8" cy="2" r="1.4" fill="#444"/><circle cx="7.2" cy="2" r="1.4" fill="#444"/><circle cx="12.6" cy="2" r="1.4" fill="#444"/></svg>
<div class="hs" style="left:1189px;top:265px;width:251px;height:2px;background:#dedede"></div>
<!-- appearance -->
<span class="t" style="left:1198.60px;top:279.00px;font-size:11px;letter-spacing:-0.838px;color:#2a2a32">Оформление</span>
<div class="a" style="left:1199px;top:301px;width:18px;height:18px;background:#fff;border:1px solid #6e6e6e"></div>
<svg style="left:1199px;top:301px" width="18" height="18"><path d="M1.4 16.6 L16.6 1.4" stroke="#f00" stroke-width="1.8"/></svg>
<span class="t" style="left:1228.70px;top:305.00px;font-size:11px;letter-spacing:-0.692px;color:#2a2a32">Заливка</span>
<div class="a" style="left:1199px;top:330px;width:18px;height:18px;background:#000;border:1px solid #777"></div>
<div class="a" style="left:1200px;top:331px;width:16px;height:16px;border:1px solid #e8e8e8"></div>
<div class="a" style="left:1204px;top:335px;width:8px;height:8px;background:#c8c8c8;border:1px solid #fff"></div>
<span class="t" style="left:1228.70px;top:334.00px;font-size:11px;letter-spacing:-0.678px;color:#2a2a32">Обводка</span>
<div class="a" style="left:1229px;top:346px;width:39px;height:1px;background:repeating-linear-gradient(90deg,#555 0 1px,transparent 1px 2px)"></div>
<div class="fld" style="left:1313px;top:328px;width:70px;height:21px;border-radius:3px"></div>
<div class="a" style="left:1314px;top:329px;width:18px;height:19px;background:#fafafa;border-right:1px solid #dcdcdc;border-radius:2px 0 0 2px"></div>
<div class="a" style="left:1364px;top:329px;width:18px;height:19px;background:#fafafa;border-left:1px solid #dcdcdc;border-radius:0 2px 2px 0"></div>
<svg style="left:1318px;top:331px" width="9" height="15" viewBox="0 0 9 15"><path d="M0.7 4.6 L4.5 0.8 L8.3 4.6 M0.7 10.4 L4.5 14.2 L8.3 10.4" fill="none" stroke="#3a3a3a" stroke-width="1.3"/></svg>
<span class="t" style="left:1335.00px;top:334.00px;font-size:11px;letter-spacing:-0.340px;color:#2a2a32">3 pt</span>
<svg style="left:1368px;top:336px" width="9" height="6" viewBox="0 0 9 6"><path d="M0.7 0.8 L4.5 4.6 L8.3 0.8" fill="none" stroke="#3a3a3a" stroke-width="1.4"/></svg>
<!-- opacity -->
<div class="a" style="left:1200px;top:360px;width:16px;height:16px;border:1px solid #6e6e6e;background:#f2f2f2 conic-gradient(#f2f2f2 25%,#d0d0d0 0 50%,#f2f2f2 0 75%,#d0d0d0 0) 1px 1px/8px 8px"></div>
<span class="t" style="left:1228.70px;top:363.00px;font-size:11px;letter-spacing:-0.590px;color:#2a2a32">Непрозрачность</span>
<div class="a" style="left:1229px;top:375px;width:75px;height:1px;background:repeating-linear-gradient(90deg,#555 0 1px,transparent 1px 2px)"></div>
<div class="fld" style="left:1313px;top:357px;width:70px;height:21px;border-radius:3px"></div>
<div class="a" style="left:1364px;top:358px;width:18px;height:19px;background:#fafafa;border-left:1px solid #dcdcdc;border-radius:0 2px 2px 0"></div>
<span class="t" style="left:1317.30px;top:363.00px;font-size:11px;letter-spacing:-0.985px;color:#2a2a32">100%</span>
<svg style="left:1369.8px;top:363.8px" width="6" height="8" viewBox="0 0 6 8"><path d="M0.7 0.6 L4.1 4 L0.7 7.4" fill="none" stroke="#3a3a3a" stroke-width="1.4"/></svg>
<span class="t" style="left:1205.50px;top:390.00px;font-size:14px;color:#444;font-style:italic">fx</span>
<svg style="left:1217px;top:401px" width="3" height="2" viewBox="0 0 3 2"><path d="M0 0 L3 0 L1.5 2 Z" fill="#444"/></svg>
<svg style="left:1411px;top:419px" width="15" height="4" viewBox="0 0 15 4"><circle cx="1.8" cy="2" r="1.4" fill="#444"/><circle cx="7.2" cy="2" r="1.4" fill="#444"/><circle cx="12.6" cy="2" r="1.4" fill="#444"/></svg>
<div class="hs" style="left:1189px;top:434px;width:251px;height:2px;background:#dedede"></div>
<!-- quick actions -->
<span class="t" style="left:1198.60px;top:451.00px;font-size:11px;letter-spacing:-0.677px;color:#2a2a32">Быстрые действия</span>
<div class="btn" style="left:1199px;top:472px;width:210px;height:21px"></div>
<div class="btn" style="left:1199px;top:503px;width:210px;height:21px"></div>
<div class="btn" style="left:1199px;top:534px;width:210px;height:21px"></div>
<div class="btn" style="left:1199px;top:565px;width:210px;height:21px"></div>
<div class="btn" style="left:1199px;top:596px;width:188px;height:21px"></div>
<div class="lf" style="left:1388px;top:596px;width:21px;height:21px;border-radius:3px"></div>
<svg style="left:1393.5px;top:604px" width="9" height="6" viewBox="0 0 9 6"><path d="M0.7 0.8 L4.5 4.6 L8.3 0.8" fill="none" stroke="#3a3a3a" stroke-width="1.3"/></svg>
<span class="t" style="left:1252.60px;top:478.00px;font-size:11px;letter-spacing:-0.583px;color:#26262e">Параллельный контур</span>
<span class="t" style="left:1274.40px;top:509.00px;font-size:11px;letter-spacing:-0.594px;color:#26262e">Перекрасить</span>
<span class="t" style="left:1229.80px;top:540.00px;font-size:11px;letter-spacing:-0.510px;color:#26262e">Выровнять по пиксельной сетке</span>
<span class="t" style="left:1274.40px;top:571.00px;font-size:11px;letter-spacing:-0.534px;color:#26262e">Упорядочить</span>
<span class="t" style="left:1222.40px;top:602.00px;font-size:11px;letter-spacing:-0.584px;color:#26262e">Начать глобальное изменение</span>
<div class="vs" id="right-edge" style="left:1439px;top:31px;height:829px;background:#cecece"></div>
<div class="hs" style="left:1148px;top:76px;width:292px;background:#d2d2d2"></div>
<div class="hs" style="left:1254px;top:103px;width:186px;background:#d2d2d2"></div>

<!-- taskbar -->
<div class="a" id="taskbar" style="left:0;top:860px;width:1440px;height:40px;background:#3b3e37;overflow:hidden">
<svg style="left:0;top:0" width="1440" height="40" viewBox="0 860 1440 40">
<defs>
<filter id="bl" x="-5%" y="-50%" width="110%" height="200%"><feGaussianBlur stdDeviation="2.2"/></filter><linearGradient id="org" gradientUnits="userSpaceOnUse" x1="1040" x2="1290" y1="0" y2="0"><stop offset="0" stop-color="#a9641f"/><stop offset="0.5" stop-color="#a05e20"/><stop offset="1" stop-color="#86561f"/></linearGradient>
<filter id="bl2" x="-5%" y="-50%" width="110%" height="200%"><feGaussianBlur stdDeviation="10 4"/></filter>
<linearGradient id="tbg" gradientUnits="userSpaceOnUse" x1="0" x2="1440" y1="0" y2="0"><stop offset="0.0000" stop-color="#2d312b"/><stop offset="0.0347" stop-color="#353932"/><stop offset="0.0750" stop-color="#42463b"/><stop offset="0.1389" stop-color="#3d4039"/><stop offset="0.2000" stop-color="#3b3e37"/><stop offset="0.3056" stop-color="#3c3f38"/><stop offset="0.3264" stop-color="#3a3c36"/><stop offset="0.3472" stop-color="#43463f"/><stop offset="0.3889" stop-color="#494c44"/><stop offset="0.4236" stop-color="#4b4e46"/><stop offset="0.4514" stop-color="#45473f"/><stop offset="0.4736" stop-color="#363730"/><stop offset="0.4931" stop-color="#33342e"/><stop offset="0.5083" stop-color="#43443d"/><stop offset="0.5312" stop-color="#45463f"/><stop offset="0.5486" stop-color="#393934"/><stop offset="0.5694" stop-color="#2f2e2a"/><stop offset="0.6250" stop-color="#2c2b27"/><stop offset="0.6333" stop-color="#33312d"/><stop offset="0.6424" stop-color="#2b2926"/><stop offset="1.0000" stop-color="#2b2926"/></linearGradient>
<radialGradient id="orb" cx="0.5" cy="0.42" r="0.6"><stop offset="0" stop-color="#3d8fd0"/><stop offset="0.6" stop-color="#1a5fa6"/><stop offset="1" stop-color="#0c3a70"/></radialGradient>
<radialGradient id="orbg" cx="0.5" cy="1" r="0.55"><stop offset="0" stop-color="#38e6ff"/><stop offset="1" stop-color="#38e6ff" stop-opacity="0"/></radialGradient>
<linearGradient id="op" x1="0" x2="1" y1="0" y2="0.25"><stop offset="0" stop-color="#e0102a"/><stop offset="0.55" stop-color="#f01a30"/><stop offset="1" stop-color="#ff4d4d"/></linearGradient>
<linearGradient id="opi" x1="0" x2="1" y1="0" y2="0"><stop offset="0" stop-color="#a80c1c"/><stop offset="1" stop-color="#d01428"/></linearGradient>
<linearGradient id="gb1" x1="0" x2="0" y1="0" y2="1"><stop offset="0" stop-color="#767873"/><stop offset="0.5" stop-color="#5a5c57"/><stop offset="1" stop-color="#4c4e49"/></linearGradient>
<linearGradient id="gb2" x1="0" x2="0" y1="0" y2="1"><stop offset="0" stop-color="#c2c3bf"/><stop offset="0.5" stop-color="#9a9b97"/><stop offset="1" stop-color="#858682"/></linearGradient>
</defs>
<rect x="0" y="860" width="1440" height="40" fill="#2d312b"/><rect x="-60" y="860" width="1560" height="40" fill="url(#tbg)" transform="translate(-739,0) skewX(40)"/>
<g filter="url(#bl)">
<path d="M1019.8 850 L1072.5 910 L1500 910 L1500 850 Z" fill="#8f8168"/>
<path d="M1019.8 850 L1072.5 910 L1258 910 L1034 860 L1022 850 Z" fill="#bba787"/>
<path d="M1024 852 L1034 860 L1258 910 L1308 910 L1300 900 L1270 884 L1240 872 L1211 866 L1185 858 L1171 852 Z" fill="url(#org)"/>
<path d="M1281 853 L1348 853 L1355 893 Z" fill="#8a5d2c" fill-opacity="0.9"/>
<path d="M1186 853 L1280 853 L1356 896 L1362 904 L1306 904 Z" fill="#9c8d74" fill-opacity="0.6"/>
</g>
<rect x="0" y="860" width="1440" height="1" fill="#22231f"/>
<rect x="0" y="861" width="1440" height="1" fill="#fff" fill-opacity="0.32"/>
<!-- start orb -->
<circle cx="27" cy="880" r="18.2" fill="#0f3d6e" stroke="#b8c8d0" stroke-opacity="0.75" stroke-width="1"/>
<circle cx="27" cy="880" r="16.8" fill="url(#orb)"/>
<ellipse cx="27" cy="890" rx="15" ry="9" fill="url(#orbg)"/>
<path d="M11 874 A17.4 17.4 0 0 1 43 874 C36 869 18 869 11 874 Z" fill="#fff" fill-opacity="0.28"/>
<g transform="translate(27.7,880) scale(1.13) translate(-27,-880)">
<path d="M19.6 870.4 C22 869 24.4 869.4 27 870.8 L25.4 878.4 C23 877.2 20.4 877 17.8 878.4 Z" fill="#e8612c"/>
<path d="M28.8 871.6 C31.2 873 33.6 873.2 36.6 871.4 L34.8 879 C32.2 880.6 29.8 880.4 27.2 879.2 Z" fill="#8cc63f"/>
<path d="M17.4 880.2 C19.8 878.8 22.4 879 25 880.4 L23.2 888.2 C20.8 886.8 18.2 886.8 15.6 888.2 Z" fill="#3a9be0"/>
<path d="M26.8 881.2 C29.2 882.6 31.8 882.6 34.4 881 L32.6 888.8 C30 890.4 27.4 890.2 25 888.8 Z" fill="#f9b916"/>
</g>
<!-- opera 1,2 -->
<g id="opera"><ellipse cx="89" cy="879.8" rx="15.2" ry="15.1" fill="url(#op)"/><ellipse cx="90.6" cy="880" rx="8.4" ry="11.6" fill="#b30e1e"/><ellipse cx="88.6" cy="880.2" rx="7.4" ry="10.8" fill="#3d4038"/><path d="M89.6 869.1 C94 869.1 97.2 874 97.2 880 C97.2 886 94 890.9 89.6 890.9 C92.4 888 93.6 884 93.6 880 C93.6 876 92.4 872 89.6 869.1 Z" fill="#3d4038" opacity="0"/></g>
<ellipse cx="151" cy="879.8" rx="15.2" ry="15.1" fill="url(#op)"/><ellipse cx="152.6" cy="880" rx="8.4" ry="11.6" fill="#b30e1e"/><ellipse cx="150.6" cy="880.2" rx="7.4" ry="10.8" fill="#3c3f38"/>
<!-- sticky notes -->
<path d="M203.6 867.8 L221 872.4 L215.4 889.6 L197.2 884 Z" fill="#8fd482" stroke="#6cb865" stroke-width="0.8"/>
<path d="M204 873 L220.6 873 L220.6 889.8 L204 889.8 Z" fill="#9fcbf2" stroke="#6aa6dc" stroke-width="0.8"/>
<path d="M208.4 877 L223.8 870.6 L228.6 885.6 L213.6 892 Z" fill="#f5df62" stroke="#d8bc38" stroke-width="0.8"/>
<!-- explorer -->
<path d="M259.6 871 L259.6 892 L290.4 892 L290.4 874 L276 874 L273 870 L262 870 C260.6 870 259.6 870.4 259.6 871 Z" fill="#f0d68a" stroke="#c9a84e" stroke-width="0.8"/>
<path d="M263 867.6 L270 867.6 L272 870 L284 870 L284 874 L263 874 Z" fill="#f7e7b0" stroke="#cbb068" stroke-width="0.6"/>
<rect x="264" y="867.4" width="3.4" height="1.8" fill="#2ea83a"/><rect x="272.6" y="868.8" width="3.2" height="1.8" fill="#d8281e"/><rect x="279.6" y="870.4" width="3.2" height="1.8" fill="#2a80e0"/>
<path d="M260 878 L290 878 L290 892 L260 892 Z" fill="#f3dc94"/>
<path d="M262.4 883.6 C262.4 882 263.6 881.4 265 881.4 L285.4 881.4 C286.8 881.4 288 882 288 883.6 L288 894.6 L281 894.6 L281 888.4 L269.4 888.4 L269.4 894.6 L262.4 894.6 Z" fill="#58b2ee" stroke="#2a78c0" stroke-width="0.9"/>
<path d="M264 883 L286.4 883 L286.4 885 L264 885 Z" fill="#a8dcfa"/>
<!-- opera button (running) -->
<rect x="308.5" y="861.5" width="57" height="37" rx="2.5" fill="url(#gb1)" stroke="#a4a5a0" stroke-width="1"/>
<path d="M309 880 C330 878 350 870 365 862 L365 898 L309 898 Z" fill="#3a3c38" fill-opacity="0.35"/>
<rect x="307.5" y="860.5" width="59" height="39" rx="3" fill="none" stroke="#1f201d" stroke-width="1"/>
<ellipse cx="336.8" cy="879.6" rx="15.2" ry="15.1" fill="url(#op)"/><ellipse cx="338.4" cy="879.8" rx="8.4" ry="11.6" fill="#b30e1e"/><ellipse cx="336.4" cy="880" rx="7.4" ry="10.8" fill="#5a5c57"/>
<!-- AI button (active) -->
<rect x="370.5" y="861.5" width="57" height="37" rx="2.5" fill="url(#gb2)" stroke="#e2e2de" stroke-width="1"/>
<path d="M371 884 C392 882 412 873 427 864 L427 898 L371 898 Z" fill="#5a5c58" fill-opacity="0.28"/>
<rect x="369.5" y="860.5" width="59" height="39" rx="3" fill="none" stroke="#1f201d" stroke-width="1"/>
<rect x="386" y="865.8" width="26" height="25.4" fill="#261300" stroke="#ff7c12" stroke-width="2.2"/>
<!-- tray -->
<path d="M1257.6 884 L1261.7 879 L1265.8 884 Z" fill="#fff"/>
<!-- color monitor -->
<rect x="1278.4" y="874" width="15.4" height="10.6" fill="#222"/>
<rect x="1279.2" y="874.8" width="4.6" height="4.6" fill="#e8203a"/><rect x="1283.8" y="874.8" width="4.6" height="4.6" fill="#f7d417"/><rect x="1288.4" y="874.8" width="4.6" height="4.6" fill="#35c04a"/>
<rect x="1279.2" y="879.4" width="4.6" height="4.4" fill="#b02ad0"/><rect x="1283.8" y="879.4" width="4.6" height="4.4" fill="#2a6af0"/><rect x="1288.4" y="879.4" width="4.6" height="4.4" fill="#18c0c8"/>
<circle cx="1286.1" cy="879.3" r="3.1" fill="#fff"/><rect x="1284.4" y="878.4" width="3.4" height="1.8" fill="#f04030"/>
<rect x="1284.4" y="884.6" width="3.4" height="1.4" fill="#111"/><rect x="1281.6" y="886" width="9" height="1" fill="#111"/>
<!-- network -->
<rect x="1307.4" y="876.4" width="10" height="8.6" fill="#6a5e4c" stroke="#fff" stroke-width="1.2"/>
<path d="M1309 888.2 L1316 888.2 M1312.4 885 L1312.4 888" stroke="#fff" stroke-width="1.3" fill="none"/>
<path d="M1303.4 873.4 L1303.4 876 M1306.4 873.4 L1306.4 876" stroke="#fff" stroke-width="1.1"/>
<rect x="1302.6" y="875.6" width="4.8" height="4" fill="#fff"/>
<path d="M1305 879 L1305 887.4 L1308 887.4" stroke="#fff" stroke-width="1.2" fill="none"/>
<!-- speaker -->
<path d="M1326.4 877.6 L1329.4 877.6 L1333.6 873.4 L1333.6 888.4 L1329.4 884.2 L1326.4 884.2 Z" fill="#e8e8e8" stroke="#fff" stroke-width="0.8"/>
<path d="M1335.6 877.8 C1336.8 879.6 1336.8 882.2 1335.6 884 M1337.8 875.8 C1339.8 878.8 1339.8 883 1337.8 886 M1340 874 C1342.6 878 1342.6 883.8 1340 887.8" fill="none" stroke="#fff" stroke-width="1"/>
<!-- show desktop -->
<rect x="1426.5" y="861.5" width="14" height="39" fill="#fff" fill-opacity="0.14" stroke="#d8d0c0" stroke-opacity="0.6" stroke-width="1"/>
<rect x="1425.5" y="861" width="1" height="39" fill="#2a241c" fill-opacity="0.6"/>
</svg>
</div>
<span class="t" style="left:390.40px;top:870.00px;font-size:18.5px;letter-spacing:-0.527px;color:#ff7c12;-webkit-text-stroke:0.35px #ff7c12">Ai</span>
<span class="t" style="left:1226.60px;top:872.00px;font-size:12px;letter-spacing:-1.122px;color:#fff">RU</span>
<span class="t" style="left:1373.00px;top:867.00px;font-size:12px;letter-spacing:-0.486px;color:#fff">16:03</span>
<span class="t" style="left:1359.60px;top:884.00px;font-size:12px;letter-spacing:-0.586px;color:#fff">05.08.2020</span>

</body></html>
